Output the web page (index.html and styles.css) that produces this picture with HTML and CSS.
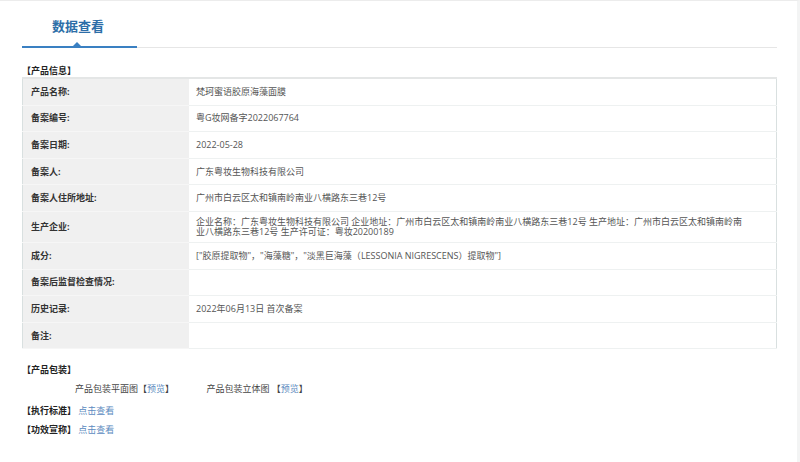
FILE: index.html
```html
<!DOCTYPE html>
<html lang="zh-CN">
<head>
  <meta charset="UTF-8">
  <meta name="viewport" content="width=device-width, initial-scale=1.0">
  <title>数据查看</title>
  <link rel="stylesheet" href="styles.css">
</head>
<body>

  <div class="pagina">
    <!-- pestaña superior -->
    <div class="tabs">
      <div class="tab activo">数据查看</div>
    </div>

    <!-- 产品信息 -->
    <div class="seccion">【产品信息】</div>
    <table class="info">
      <tr><td class="etiqueta">产品名称:</td><td>梵珂蜜语胶原海藻面膜</td></tr>
      <tr><td class="etiqueta">备案编号:</td><td>粤G妆网备字2022067764</td></tr>
      <tr><td class="etiqueta">备案日期:</td><td>2022-05-28</td></tr>
      <tr><td class="etiqueta">备案人:</td><td>广东粤妆生物科技有限公司</td></tr>
      <tr><td class="etiqueta">备案人住所地址:</td><td>广州市白云区太和镇南岭南业八横路东三巷12号</td></tr>
      <tr><td class="etiqueta">生产企业:</td><td>企业名称：广东粤妆生物科技有限公司 企业地址：广州市白云区太和镇南岭南业八横路东三巷12号 生产地址：广州市白云区太和镇南岭南业八横路东三巷12号 生产许可证：粤妆20200189</td></tr>
      <tr><td class="etiqueta">成分:</td><td>["胶原提取物"，"海藻糖"，"淡黑巨海藻（LESSONIA NIGRESCENS）提取物"]</td></tr>
      <tr><td class="etiqueta">备案后监督检查情况:</td><td></td></tr>
      <tr><td class="etiqueta">历史记录:</td><td>2022年06月13日 首次备案</td></tr>
      <tr><td class="etiqueta">备注:</td><td></td></tr>
    </table>

    <!-- 产品包装 -->
    <div class="seccion abajo">【产品包装】</div>
    <div class="empaque">
      <span class="foto">产品包装平面图【<a href="#">预览</a>】</span>
      <span class="foto">产品包装立体图 【<a href="#">预览</a>】</span>
    </div>

    <div class="enlace primero"><b>【执行标准】</b> <a href="#">点击查看</a></div>
    <div class="enlace"><b>【功效宣称】</b> <a href="#">点击查看</a></div>
  </div>

</body>
</html>
```

FILE: styles.css
```css
html, body {
  height: 100%;
}

body {
  font-family: "Open Sans", "Noto Sans CJK SC", sans-serif;
  background-color: #fff;
  margin: 0;
  border-top: 1px solid #ececec;
  border-right: 3px solid #f3f4f4;
  box-sizing: border-box;
  color: #333;
}

.pagina {
  width: 755px;
  margin-left: 22px;
  min-height: 100%;
}

a {
  color: #5b8ac0;
  text-decoration: none;
}

/* pestañas */
.tabs {
  border-bottom: 1px solid #e6e6e6;
}

.tab {
  position: relative;
  width: 115px;
  box-sizing: border-box;
  padding: 16px 0 10px 30px;
  font-size: 13px;
  line-height: 19px;
  font-weight: bold;
  color: #2d6ea8;
  margin-bottom: -1px;
}

.tab.activo {
  border-bottom: 2px solid #3a80c2;
}

.tab.activo::after {
  content: "";
  position: absolute;
  left: 51px;
  bottom: 0;
  border-left: 4px solid transparent;
  border-right: 4px solid transparent;
  border-bottom: 4px solid #3a80c2;
}

/* títulos de sección */
.seccion {
  font-size: 9px;
  line-height: 12px;
  font-weight: bold;
  color: #222;
  margin-top: 17px;
}

.seccion.abajo {
  margin-top: 15px;
}

/* tabla de información */
.info {
  width: 100%;
  border-collapse: collapse;
  border: 1px solid #d9e0e0;
  border-top: 2px solid #e4e6e6;
  font-size: 9px;
  line-height: 10px;
}

.info td {
  height: 15.6px;
  padding: 5px 32px 5px 7px;
  border-bottom: 1px solid #eef1f1;
  color: #555;
  vertical-align: middle;
}

.info td.etiqueta {
  width: 151px;
  padding: 5px 7px 5px 8px;
  background-color: #f0f0f0;
  border-bottom-color: #f6f6f6;
  font-weight: bold;
  color: #333;
}

/* empaque y enlaces */
.empaque {
  font-size: 9px;
  line-height: 12px;
  color: #444;
  margin-top: 7px;
  padding-left: 53px;
}

.foto {
  margin-right: 30px;
}

.enlace {
  font-size: 9px;
  line-height: 12px;
  margin-top: 7px;
  color: #222;
}

.enlace.primero {
  margin-top: 10px;
}
```
